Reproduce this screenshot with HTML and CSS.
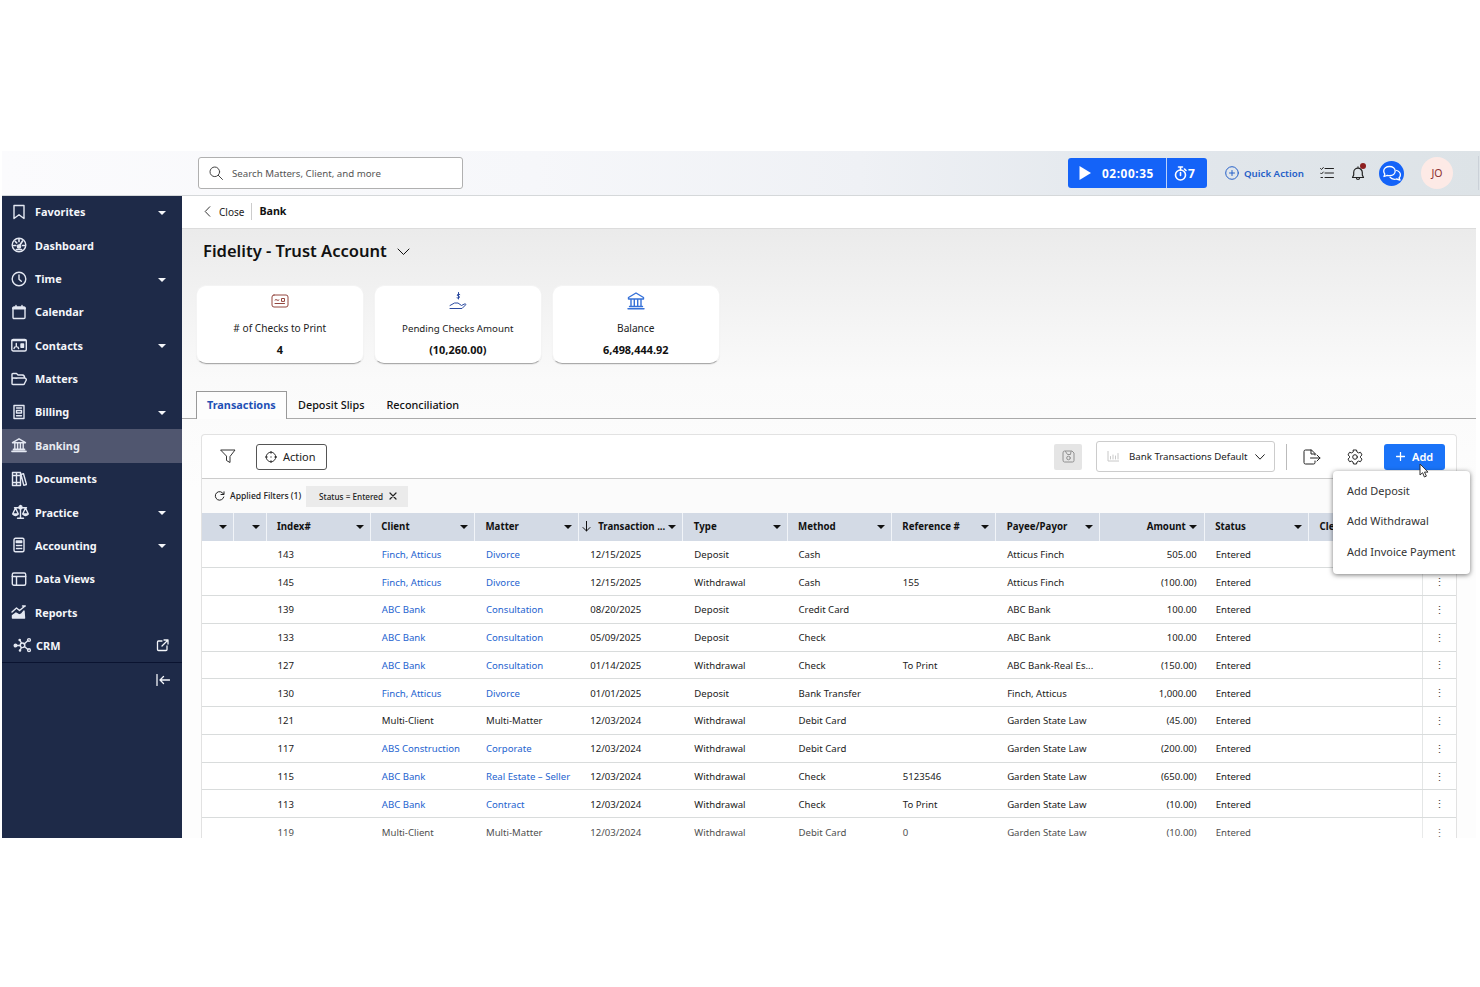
FILE: index.html
```html
<!DOCTYPE html>
<html lang="en">
<head>
<meta charset="utf-8">
<title>Bank</title>
<link rel="stylesheet" href="styles.css">
</head>
<body>
<div class="app">
  <header class="topbar">
    <div class="search"><svg class="ic search-ic" viewBox="0 0 14 14"><circle cx="5.8" cy="5.8" r="4.8"/><path d="M9.3 9.3l4.2 4.2"/></svg><span>Search Matters, Client, and more</span></div>
    <div class="timer">
      <div class="timer-main"><svg class="play" viewBox="0 0 12 14"><path d="M.5 0L12 7L.5 14z"/></svg><span>02:00:35</span></div>
      <div class="timer-count"><svg class="ic stopwatch" viewBox="0 0 13 15"><circle cx="6.5" cy="9" r="5"/><path d="M4.5 1h4M6.500 1v3M10.500 3l1.500 1.500M6.500 6.500v3"/></svg><span>7</span></div>
    </div>
    <div class="quick"><svg class="ic" viewBox="0 0 14 14"><circle cx="7" cy="7" r="6.300"/><path d="M7 4.500v5M4.500 7h5"/></svg><span>Quick Action</span></div>
    <svg class="ic tasks" viewBox="0 0 14 12"><path d="M5 1.500h8.500M5 6h8.500M5 10.500h8.500M.5 1.500l1 1 1.800-2M.5 6l1 1 1.800-2M1 10.500h1.500"/></svg>
    <div class="bell"><svg class="ic" viewBox="0 0 14 15"><path d="M1.500 11.500h11L11.300 9V6.500a4.300 4.300 0 0 0-8.600 0V9zM5.500 12a1.500 1.500 0 0 0 3 0M7 2V.8"/></svg><i class="dot"></i></div>
    <div class="chat"><svg class="ic" viewBox="0 0 20 16"><path d="M7.500 1.500c3.300 0 5.700 2 5.700 4.600s-2.400 4.600-5.700 4.600c-.8 0-1.500-.1-2.200-.3L2 11.500l.8-2.400C2.200 8.300 1.700 7.300 1.700 6.100c0-2.600 2.500-4.600 5.800-4.600z"/><path d="M8 12.200c1 1.500 2.600 2.100 4.500 2.100.7 0 1.300-.1 1.900-.3l3.600 1-.9-2.300c.8-.8 1.300-1.700 1.300-2.800 0-2-1.500-3.700-3.800-4.400"/></svg></div>
    <div class="avatar">JO</div>
    <i class="edge"></i>
  </header>

  <div class="body">
    <nav class="side">
      <a class="item"><svg class="ic" viewBox="0 0 16 16"><path d="M3 1.500h10v13l-5-3.700-5 3.700z"/></svg><span>Favorites</span><i class="caret"></i></a>
      <a class="item"><svg class="ic" viewBox="0 0 16 16"><circle cx="8" cy="8" r="6.800"/><path d="M8 2.500v2M2.800 8.500h2M11.500 8.500h2M4.300 4.500l1.400 1.400M11.500 4L8.300 9M5.500 12.500h5" stroke-width="1.700"/><circle class="fill" cx="8" cy="9.500" r="1.600"/></svg><span>Dashboard</span></a>
      <a class="item"><svg class="ic" viewBox="0 0 16 16"><circle cx="8" cy="8" r="6.800"/><path d="M8 4v4.300l2.300 2"/></svg><span>Time</span><i class="caret"></i></a>
      <a class="item"><svg class="ic" viewBox="0 0 16 16"><rect x="2" y="3" width="12" height="11.500" rx="1"/><path d="M2.500 4.300h11" stroke-width="2.600"/><path d="M5 1.500v2M11 1.500v2"/></svg><span>Calendar</span></a>
      <a class="item"><svg class="ic" viewBox="0 0 16 16"><rect x=".8" y="2.500" width="14.500" height="11.500" rx="1.500"/><path d="M1 3.500h14M3 11.500c.3-1.500 1-2 2.300-2s2 .5 2.300 2M5.300 6.500v3"/><rect class="fill" x="10" y="7" width="2.500" height="3.200"/></svg><span>Contacts</span><i class="caret"></i></a>
      <a class="item"><svg class="ic" viewBox="0 0 16 16"><path d="M1 12.500v-9q0-1 1-1h3.500l1.500 1.500h4.500q2 .3 2.300 3M1.300 7H13.500q2 .3 1.800 2L13.500 12.500q-.3 1-1.300 1H2q-1 0-1-1zM2 7l4 .2"/></svg><span>Matters</span></a>
      <a class="item"><svg class="ic" viewBox="0 0 16 16"><path d="M3 1.500h10v13H3zM5.500 4h5M5.500 6.500h5v2.500h-5zM5.500 11.700h5"/></svg><span>Billing</span><i class="caret"></i></a>
      <a class="item on"><svg class="ic" viewBox="0 0 16 16"><path d="M1.500 5.700L8 1.800l6.500 3.900zM3.800 6v6M6.600 6.500V12M9.400 6.500V12M12.200 6v6" /><path d="M2.500 12.300h11M1 14.300h14" stroke-width="1.700"/></svg><span>Banking</span></a>
      <a class="item"><svg class="ic" viewBox="0 0 16 16"><path d="M1.500 1.500h4v13h-4zM5.500 1.500h4v13h-4zM10 3.500l2.500-.8 3 10.800-2.700.9zM1.500 4.500h8M1.500 11.500h8"/></svg><span>Documents</span></a>
      <a class="item"><svg class="ic wide" viewBox="0 0 18 16"><path d="M9 1.500v12.500M6 14.300h6M3 3.800h12M4 4L1.200 10h5.600zM14 4l-2.800 6h5.600zM1.200 10q2.800 3 5.600 0M11.200 10q2.800 3 5.600 0"/><circle cx="9" cy="3.300" r="1.500"/></svg><span>Practice</span><i class="caret"></i></a>
      <a class="item"><svg class="ic" viewBox="0 0 16 16"><rect x="3" y="1.300" width="10" height="13.400" rx="1.500"/><path d="M5.300 4h5.400v1.500H5.300zM5.500 8.500h1M7.500 8.500h1M9.700 8.500h1M5.500 11.500h1M7.500 11.500h1M9.700 11.500h1"/></svg><span>Accounting</span><i class="caret"></i></a>
      <a class="item"><svg class="ic" viewBox="0 0 16 16"><rect x="1.300" y="2" width="13.400" height="12.300" rx="1.500"/><path d="M1.300 5.500h13.400M5.500 5.500v8.800"/></svg><span>Data Views</span></a>
      <a class="item"><svg class="ic" viewBox="0 0 16 16"><path d="M1 8l4.500-4L8.500 6.500l5.500-4.500M11.500 2h2.800"/><path class="fill" d="M1.500 14V11.500l3.500-2.500 3.500 2 2.500-1.500 2-2.500.5 7z"/></svg><span>Reports</span></a>
      <a class="item crm"><svg class="ic wide" viewBox="0 0 18 16"><path d="M3 8.500h4M10.700 7L14.500 3.500M10.900 9.500l3.500 3M8 6L6.500 3.500M8 10.500l-1.300 2.500"/><circle cx="9" cy="8.300" r="2.300"/><circle class="fill" cx="2" cy="8.500" r="1.300"/><circle cx="15.500" cy="3" r="1.400"/><circle cx="15.500" cy="13.200" r="1.400"/><circle class="fill" cx="6.200" cy="3" r=".6"/><circle class="fill" cx="6.500" cy="13.500" r=".6"/></svg><span>CRM</span><svg class="ic ext" viewBox="0 0 13 13"><path d="M6 2H2.500q-1 0-1 1v7.500q0 1 1 1H10q1 0 1-1V7M8 1h4v4M12 1L6 7"/></svg></a>
      <div class="collapse"><svg class="ic" viewBox="0 0 14 12"><path d="M1 .5v11M13.500 6H4M7.500 2.500L4 6l3.500 3.500"/></svg></div>
    </nav>

    <main class="main">
      <div class="crumbs"><svg class="ic back" viewBox="0 0 7 12"><path d="M6 .8L1 6l5 5.200"/></svg><span class="close">Close</span><i class="bar"></i><b>Bank</b></div>
      <div class="content">
        <h1 class="title"><span>Fidelity - Trust Account</span><svg class="ic" viewBox="0 0 13 8"><path d="M1 1l5.500 5.500L12 1"/></svg></h1>
        <div class="cards">
          <div class="card"><svg class="ic red" viewBox="0 0 18 14"><rect x="1" y="1" width="16" height="12" rx="2"/><path d="M4 6q1-1 2 0t2 0M4 9.500h9.500M10.500 7V4.500h3V7z"/></svg><span>&#35; of Checks to Print</span><b>4</b></div>
          <div class="card"><svg class="ic navy" viewBox="0 0 18 18"><path d="M1 16.500h12l4-4q-.8-1.200-2-.3L12.500 13.500 9 11H5.500L1 13.500M10.800 2.500Q9.500 1.500 8.500 2.500t.8 1.500 1 1.600-2.300.3M9.500.5v6.500"/></svg><span class="tight">Pending Checks Amount</span><b>(10,260.00)</b></div>
          <div class="card"><svg class="ic blue" viewBox="0 0 18 18"><path d="M1.500 5.500L9 1l7.500 4.500v1.500h-15zM4 7v7.500M7.300 7v7.500M10.700 7v7.500M14 7v7.500M2.500 14.500h13M1 16.700h16"/></svg><span>Balance</span><b>6,498,444.92</b></div>
        </div>
        <div class="tabs"><span class="tab active">Transactions</span><span class="tab">Deposit Slips</span><span class="tab">Reconciliation</span></div>

        <section class="panel">
          <div class="tools">
            <svg class="ic funnel" viewBox="0 0 16 15"><path d="M1 1h14L10 7.500v6L6.500 11.500v-4z"/></svg>
            <div class="action"><svg class="ic" viewBox="0 0 13 13"><circle cx="6.500" cy="6.500" r="5.200"/><path d="M6.500.3v2.200M6.500 10.500v2.200M.3 6.500h2.200M10.500 6.500h2.200M6.200 6.500h.6"/></svg><span>Action</span></div>
            <div class="save"><svg class="ic" viewBox="0 0 13 13"><path d="M1 2.500q0-1.500 1.500-1.500H10l2 2v7.500q0 1.500-1.500 1.500h-8Q1 12 1 10.500zM3.500 1.500l2 3h3l.5-3"/><circle cx="6.500" cy="8" r="1.800"/></svg></div>
            <div class="select"><svg class="ic chart" viewBox="0 0 12 11"><path d="M1 0v10h11M3.500 8V5.500M6 8V4M8.500 8V5M11 8V2.500"/></svg><span>Bank Transactions Default</span><svg class="ic chev" viewBox="0 0 10 6"><path d="M.7.7L5 5.200 9.300.7"/></svg></div>
            <i class="sep"></i>
            <svg class="ic export" viewBox="0 0 18 16"><path d="M12 6V4.500L8.500 1H2.500Q1 1 1 2.500v11Q1 15 2.500 15h8q1.500 0 1.500-1.500V12M8 1v4h4M7.500 9h9.500M14 6l3 3-3 3"/></svg>
            <svg class="ic gear" viewBox="0 0 16 16"><path d="M6.500 1h3l.5 2 1.500.9 2-.6L15 5.900 13.500 7.300v1.400L15 10.100l-1.500 2.600-2-.6-1.500.9-.5 2h-3L6 13l-1.500-.9-2 .6L1 10.100 2.500 8.700V7.300L1 5.900l1.500-2.600 2 .6L6 3z"/><circle cx="8" cy="8" r="2.300"/></svg>
            <div class="add"><svg class="ic" viewBox="0 0 10 10"><path d="M5 .5v9M.5 5h9"/></svg><span>Add</span>
              <svg class="cursor" viewBox="0 0 10 15"><path d="M1 1v11l2.600-2.300L5.400 14l2-.9-1.900-4H9z"/></svg>
              <div class="menu"><span>Add Deposit</span><span>Add Withdrawal</span><span>Add Invoice Payment</span></div>
            </div>
          </div>
          <div class="filters"><svg class="ic" viewBox="0 0 11 11"><path d="M9.500 3A4.300 4.300 0 1 0 9.800 6M10 .8V3.500H7"/></svg><span class="applied">Applied Filters (1)</span><div class="chip"><span>Status = Entered</span><svg class="ic" viewBox="0 0 8 8"><path d="M1 1l6 6M7 1L1 7"/></svg></div></div>
          <div class="grid">
            <div class="row head"><div><i class="caret"></i></div><div><i class="caret"></i></div><div>Index#<i class="caret"></i></div><div>Client<i class="caret"></i></div><div>Matter<i class="caret"></i></div><div class="sorted"><svg class="ic" viewBox="0 0 9 11"><path d="M4.500 0v10M1 6.500L4.500 10 8 6.500"/></svg>Transaction ...<i class="caret"></i></div><div>Type<i class="caret"></i></div><div>Method<i class="caret"></i></div><div>Reference #<i class="caret"></i></div><div>Payee/Payor<i class="caret"></i></div><div class="amt">Amount<i class="caret"></i></div><div>Status<i class="caret"></i></div><div>Cle</div><div></div></div>
            <div class="row"><div></div><div></div><div>143</div><div class="lk">Finch, Atticus</div><div class="lk">Divorce</div><div>12/15/2025</div><div>Deposit</div><div>Cash</div><div></div><div>Atticus Finch</div><div class="num">505.00</div><div>Entered</div><div></div><div class="more"></div></div>
            <div class="row"><div></div><div></div><div>145</div><div class="lk">Finch, Atticus</div><div class="lk">Divorce</div><div>12/15/2025</div><div>Withdrawal</div><div>Cash</div><div>155</div><div>Atticus Finch</div><div class="num">(100.00)</div><div>Entered</div><div></div><div class="more">⋮</div></div>
            <div class="row"><div></div><div></div><div>139</div><div class="lk">ABC Bank</div><div class="lk">Consultation</div><div>08/20/2025</div><div>Deposit</div><div>Credit Card</div><div></div><div>ABC Bank</div><div class="num">100.00</div><div>Entered</div><div></div><div class="more">⋮</div></div>
            <div class="row"><div></div><div></div><div>133</div><div class="lk">ABC Bank</div><div class="lk">Consultation</div><div>05/09/2025</div><div>Deposit</div><div>Check</div><div></div><div>ABC Bank</div><div class="num">100.00</div><div>Entered</div><div></div><div class="more">⋮</div></div>
            <div class="row"><div></div><div></div><div>127</div><div class="lk">ABC Bank</div><div class="lk">Consultation</div><div>01/14/2025</div><div>Withdrawal</div><div>Check</div><div>To Print</div><div>ABC Bank-Real Es...</div><div class="num">(150.00)</div><div>Entered</div><div></div><div class="more">⋮</div></div>
            <div class="row"><div></div><div></div><div>130</div><div class="lk">Finch, Atticus</div><div class="lk">Divorce</div><div>01/01/2025</div><div>Deposit</div><div>Bank Transfer</div><div></div><div>Finch, Atticus</div><div class="num">1,000.00</div><div>Entered</div><div></div><div class="more">⋮</div></div>
            <div class="row"><div></div><div></div><div>121</div><div>Multi-Client</div><div>Multi-Matter</div><div>12/03/2024</div><div>Withdrawal</div><div>Debit Card</div><div></div><div>Garden State Law</div><div class="num">(45.00)</div><div>Entered</div><div></div><div class="more">⋮</div></div>
            <div class="row"><div></div><div></div><div>117</div><div class="lk">ABS Construction</div><div class="lk">Corporate</div><div>12/03/2024</div><div>Withdrawal</div><div>Debit Card</div><div></div><div>Garden State Law</div><div class="num">(200.00)</div><div>Entered</div><div></div><div class="more">⋮</div></div>
            <div class="row"><div></div><div></div><div>115</div><div class="lk">ABC Bank</div><div class="lk">Real Estate – Seller</div><div>12/03/2024</div><div>Withdrawal</div><div>Check</div><div>5123546</div><div>Garden State Law</div><div class="num">(650.00)</div><div>Entered</div><div></div><div class="more">⋮</div></div>
            <div class="row"><div></div><div></div><div>113</div><div class="lk">ABC Bank</div><div class="lk">Contract</div><div>12/03/2024</div><div>Withdrawal</div><div>Check</div><div>To Print</div><div>Garden State Law</div><div class="num">(10.00)</div><div>Entered</div><div></div><div class="more">⋮</div></div>
            <div class="row last"><div></div><div></div><div>119</div><div>Multi-Client</div><div>Multi-Matter</div><div>12/03/2024</div><div>Withdrawal</div><div>Debit Card</div><div>0</div><div>Garden State Law</div><div class="num">(10.00)</div><div>Entered</div><div></div><div class="more">⋮</div></div>
          </div>
        </section>
      </div>
    </main>
  </div>
</div>
</body>
</html>
```
FILE: styles.css
```css
* { box-sizing: border-box; }
body { margin: 0; padding-top: 151px; background: #fff; font-family: "Noto Sans", "Open Sans", sans-serif; font-size: 10px; color: #222; height: 987px; overflow: hidden; }
.app { margin-left: 2px; height: 687px; display: flex; flex-direction: column; overflow: hidden; white-space: nowrap; }
.ic { fill: none; stroke: currentColor; stroke-width: 1; stroke-linecap: round; stroke-linejoin: round; flex: none; }
.ic .fill { fill: currentColor; }

/* Top bar */
.topbar { height: 45px; flex: none; display: flex; align-items: center; background: linear-gradient(90deg, #fbfbfd 0, #f6f7fa 36%, #eff1f5 58%, #e2e7ec 78%, #dde3e7 100%); border-bottom: 1px solid #d5d8da; }
.search { margin-left: 196px; width: 265px; height: 32px; background: #fff; border: 1px solid #b0b0b0; border-radius: 3px; display: flex; align-items: center; padding-left: 10px; color: #555; font-size: 9.700px; }
.search-ic { width: 14px; height: 14px; margin-right: 9px; color: #444; }
.timer { margin-left: 605px; height: 30px; width: 139px; display: flex; background: #1463f8; color: #fff; border-radius: 3px; font-weight: 700; font-size: 12px; letter-spacing: .6px; }
.timer-main { width: 99px; display: flex; align-items: center; padding-left: 11px; gap: 11px; border-right: 1px solid #b9d0fb; }
.timer-main span { font-size: 11.800px; }
.play { width: 12px; height: 14px; fill: #fff; }
.timer-count { display: flex; align-items: center; padding-left: 7px; gap: 1px; }
.stopwatch { width: 13px; height: 15px; stroke-width: 1.6; }
.quick { margin-left: 18px; width: 80px; display: flex; align-items: center; gap: 5px; color: #2560c8; font-weight: 600; font-size: 9.700px; }
.quick svg { width: 14px; height: 14px; }
.tasks { width: 14px; height: 12px; margin-left: 15px; color: #222; }
.bell { position: relative; width: 14px; height: 15px; margin-left: 17px; color: #222; }
.bell svg { width: 14px; height: 15px; display: block; stroke-width: 1.200; }
.dot { position: absolute; left: 9px; top: -3px; width: 6px; height: 6px; border-radius: 50%; background: #8e2020; }
.chat { margin-left: 14px; width: 25px; height: 25px; border-radius: 50%; background: #1463f8; color: #fff; display: flex; align-items: center; justify-content: center; }
.chat svg { width: 20px; height: 16px; stroke-width: 1.3; }
.avatar { margin-left: 17px; width: 32px; height: 32px; border-radius: 50%; background: #fdeae6; color: #8c3030; display: flex; align-items: center; justify-content: center; font-size: 10.500px; }
.edge { margin-left: auto; margin-right: 1px; width: 1px; height: 34px; background: #cbd1d8; }

/* Sidebar */
.body { flex: 1; display: flex; min-height: 0; }
.side { width: 180px; flex: none; background: #1e2a48; color: #f4f6fa; display: flex; flex-direction: column; font-weight: 700; font-size: 10.900px; }
.item { height: 33.350px; flex: none; display: flex; align-items: center; padding-left: 9px; padding-right: 16px; padding-bottom: 1.500px; }
.item > svg:first-child { width: 16px; height: 16px; margin-right: 8px; stroke-width: 1.4; color: #e4e8f2; }
.item > svg.wide { width: 19px; margin-right: 5px; }
.item.on { background: #50566f; color: #e8eaf0; }
.item.crm > svg.wide { margin-left: 2px; margin-right: 4px; }
.caret { width: 0; height: 0; border: 4px solid transparent; border-top: 4.500px solid currentColor; border-bottom: 0; margin-left: auto; flex: none; }
.item .caret { margin-top: 2px; }
.ext { width: 13px; height: 13px; margin-left: auto; margin-right: -3px; stroke-width: 1.3; }
.collapse { margin-top: -1px; border-top: 1px solid #0a1330; display: flex; justify-content: flex-end; padding: 11px 12px 0 0; }
.collapse svg { width: 14px; height: 12px; stroke-width: 1.3; }

/* Main */
.main { flex: 1; min-width: 0; display: flex; flex-direction: column; }
.crumbs { height: 32px; flex: none; background: #fff; display: flex; align-items: center; padding-left: 22px; padding-bottom: 1px; font-size: 10px; }
.back { width: 7px; height: 11px; margin-right: 8px; }
.bar { width: 1px; height: 17px; background: #ccc; margin: 0 7px; }
.crumbs b { font-size: 10.700px; color: #111; line-height: 14px; padding-bottom: 1px; }
.content { flex: 1; min-height: 0; width: 1294px; display: flex; flex-direction: column; background: linear-gradient(#ebebeb, #fafafa 150px, #fdfdfd 260px); border-top: 1px solid #dcdcdc; }
.title { margin: 9px 0 0 21px; height: 25px; display: flex; align-items: center; gap: 10px; font-size: 16.550px; font-weight: 600; color: #111; }
.title svg { width: 13px; height: 8px; margin-top: 2px; }
.cards { margin: 22px 0 0 14px; display: flex; gap: 10.500px; }
.card { width: 167.500px; height: 79px; border-radius: 10px; background: #fff; border: 1px solid #f4f4f4; border-bottom-color: #aaa; box-shadow: 0 1px 1px #0001; display: flex; flex-direction: column; align-items: center; font-size: 10.150px; }
.card svg { width: 18px; height: 18px; margin-top: 6px; }
.card span { margin-top: 11px; line-height: 15px; }
.card .tight { font-size: 9.700px; }
.card b { margin-top: 6px; line-height: 15px; color: #111; font-size: 10.900px; }
.red { color: #94463f; }
.navy { color: #2b4aa0; }
.blue { color: #3671d8; }
.blue.ic { stroke-width: 1.400; }
.tabs { margin-top: 27px; height: 28px; flex: none; display: flex; padding-left: 14px; border-bottom: 1px solid #aaa; font-size: 10.850px; color: #111; font-weight: 500; }
.tab { height: 27px; padding: 0 11px; line-height: 27px; }
.tab.active { height: 28px; width: 91px; padding: 0 10px; border: 1px solid #999; border-bottom: 0; background: #fdfdfd; color: #1f50b5; font-weight: 700; line-height: 26px; }

/* Grid panel */
.panel { margin: 15px 0 0 19px; width: 1256px; flex: 1; min-height: 0; background: #fff; border: 1px solid #e2e2e2; border-width: 1px 1px 0; border-radius: 4px 4px 0 0; display: flex; flex-direction: column; }
.tools { height: 44px; flex: none; display: flex; align-items: center; border-bottom: 1px solid #ccc; padding-left: 18px; padding-right: 11px; }
.funnel { width: 16px; height: 15px; color: #333; }
.action { margin-left: 20px; margin-right: auto; width: 71px; height: 26px; border: 1px solid #555; border-radius: 3px; display: flex; align-items: center; gap: 6px; padding-left: 8px; font-size: 11px; }
.action svg { width: 12px; height: 12px; }
.save { width: 28px; height: 26px; border-radius: 2px; background: #e5e5e5; color: #909090; display: flex; align-items: center; justify-content: center; }
.save svg { width: 13px; height: 13px; }
.select { margin-left: 14px; width: 179px; height: 31px; border: 1px solid #ccc; border-radius: 3px; display: flex; align-items: center; padding: 0 9px 0 10px; font-size: 9.700px; }
.chart { width: 12px; height: 11px; margin-right: 10px; color: #c8c8c8; }
.chev { width: 10px; height: 6px; margin-left: auto; }
.sep { margin-left: 11px; width: 1px; height: 26px; background: #bbb; }
.export { width: 18px; height: 16px; margin-left: 16px; }
.gear { width: 16px; height: 16px; margin-left: 26px; }
.add { position: relative; margin-left: 21px; width: 61px; height: 26px; background: #1a73f8; color: #fff; border-radius: 3px; display: flex; align-items: center; padding-left: 12px; gap: 7px; font-weight: 600; font-size: 11px; }
.add > .ic { width: 9px; height: 9px; stroke-width: 1.4; }
.cursor { position: absolute; left: 35px; top: 19px; width: 10px; height: 15px; fill: #fff; stroke: #333; stroke-width: 1; z-index: 3; }
.menu { position: absolute; z-index: 2; top: 27px; left: -51px; width: 137px; height: 103px; border-radius: 4px; background: #fff; color: #333; box-shadow: 0 1px 5px #0008; padding: 5.500px 0 0 14px; display: flex; flex-direction: column; font-size: 10.950px; font-weight: 400; line-height: 30.400px; }
.filters { height: 34px; flex: none; display: flex; align-items: center; background: #fbfbfb; padding-left: 12px; font-size: 8.600px; font-weight: 500; }
.filters > svg { width: 11px; height: 11px; margin-right: 5px; }
.applied { width: 71px; }
.chip { height: 21px; width: 102px; margin-left: 5px; background: #ebebeb; display: flex; align-items: center; padding-left: 13px; gap: 6px; font-size: 8.200px; }
.chip svg { width: 8px; height: 8px; stroke-width: 1.2; }
.grid { flex: 1; min-height: 0; overflow: hidden; }
.row { display: grid; grid-template-columns: 31.500px 33px 104.300px 104.200px 104.200px 104.200px 104.200px 104.300px 104.300px 104.300px 104.300px 104.300px 112.500px 1fr; height: 27.770px; align-items: center; border-bottom: 1px solid #d9dcdc; font-size: 9.600px; }
.row > div { padding-left: 11px; padding-top: 1px; height: 100%; display: flex; align-items: center; }
.row.head { height: 27.500px; background: #d3dae5; border: 0; font-weight: 700; font-size: 9.700px; color: #111; }
.head > div { padding: 0 6px 0 10.500px; border-right: 1px solid #f1f4f8; }
.head > div.sorted { padding-left: 3px; }
.sorted svg { width: 9px; height: 11px; margin-right: 7px; }
.head > .amt { justify-content: flex-end; padding-right: 7px; }
.amt .caret { margin-left: 3px; }
.row > .lk { color: #2563cf; }
.row > .num { justify-content: flex-end; padding-right: 8px; }
.row > .more { padding: 0; justify-content: center; border-left: 1px solid #e4e6e6; color: #444; font-size: 11px; }
.row.last { border: 0; opacity: .8; }
```
